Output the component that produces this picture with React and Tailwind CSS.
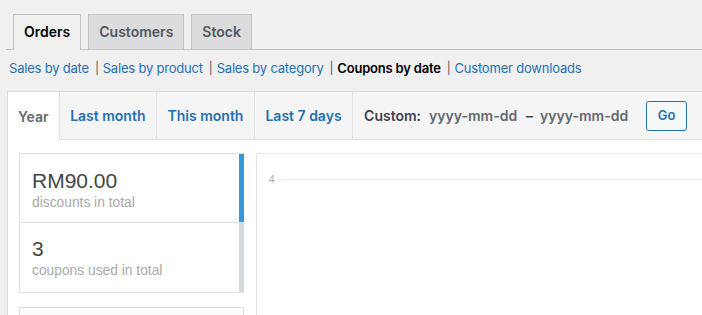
import React from "react";

const navTabs = [
  { label: "Orders", active: true },
  { label: "Customers" },
  { label: "Stock" },
];

const subLinks = [
  { label: "Sales by date" },
  { label: "Sales by product" },
  { label: "Sales by category" },
  { label: "Coupons by date", current: true },
  { label: "Customer downloads" },
];

const ranges = [
  { label: "Year", active: true },
  { label: "Last month" },
  { label: "This month" },
  { label: "Last 7 days" },
];

export default function App() {
  return (
    <div
      className="w-[702px] h-[315px] overflow-hidden bg-[#f0f0f1]"
      style={{ fontFamily: "Inter, 'Noto Sans', sans-serif" }}
    >
      {/* Nav tabs */}
      <div className="ml-[6px] pt-[14px] pl-[7px] flex gap-[7px] border-b border-[#c3c4c7]">
        {navTabs.map((t) => (
          <div
            key={t.label}
            className={
              "h-[35px] px-[10px] flex items-center border-x border-t border-[#c3c4c7] text-[14px] font-semibold leading-[24px] " +
              (t.active
                ? "bg-[#f0f0f1] text-[#000] -mb-px h-[36px] pb-px"
                : "bg-[#dcdcde] text-[#50575e]")
            }
          >
            {t.label}
          </div>
        ))}
      </div>

      {/* Sub links */}
      <div className="mt-[5px] pl-[9px] h-[26px] flex items-center text-[13px] leading-[26px] tracking-[-0.2px]">
        {subLinks.map((l, i) => (
          <React.Fragment key={l.label}>
            <span
              className={
                l.current ? "text-black font-semibold" : "text-[#2271b1]"
              }
            >
              {l.label}
            </span>
            {i < subLinks.length - 1 && (
              <span className="ml-[6px] mr-[4px] text-[#50575e] text-[12px]">|</span>
            )}
          </React.Fragment>
        ))}
      </div>

      {/* Stats box */}
      <div className="ml-[7px] mt-[10px] bg-white border-l border-t border-[#dcdcde] h-[300px]">
        {/* range tabs */}
        <div className="h-[48px] flex bg-[#f5f5f5] border-b border-[#dcdcde] text-[14px] font-semibold">
          {ranges.map((r) => (
            <div
              key={r.label}
              className={
                "flex items-center border-r border-[#e2e2e2] " +
                (r.active
                  ? "px-[10px] bg-white text-[#646970] h-[48px] -mb-px"
                  : "px-[10.5px] text-[#2271b1]")
              }
            >
              {r.label}
            </div>
          ))}
          <div className="flex items-center pl-[11px]">
            <span className="text-[#3c434a]">Custom:</span>
            <span className="ml-[8px] w-[97px] text-[#646970]">yyyy-mm-dd</span>
            <span className="w-[8px] text-[#3c434a]">–</span>
            <span className="ml-[6px] w-[106px] text-[#646970]">yyyy-mm-dd</span>
            <button className="w-[41px] h-[30px] rounded-[3px] border border-[#2271b1] bg-[#f6f7f7] text-[#2271b1] text-[13px] font-semibold">
              Go
            </button>
          </div>
        </div>

        {/* content */}
        <div className="flex pl-[11px] pt-[13px]">
          <div className="w-[225px] shrink-0">
            <ul
              className="border-y border-l border-[#dfdfdf]"
              style={{ fontFamily: "'Liberation Sans', Arial, sans-serif" }}
            >
              <li className="border-r-[5px] border-[#3498db] pl-[12px] pt-[14px] pb-[10px]">
                <div className="text-[21px] leading-[25px] text-[#464646]">RM90.00</div>
                <div className="text-[13.8px] leading-[19px] text-[#aaa]">discounts in total</div>
              </li>
              <li className="border-t border-t-[#dfdfdf] border-r-[5px] border-r-[#d5d9dc] pl-[12px] pt-[13px] pb-[12px]">
                <div className="text-[21px] leading-[25px] text-[#464646]">3</div>
                <div className="text-[13.8px] leading-[19px] text-[#aaa]">coupons used in total</div>
              </li>
            </ul>
            <div className="mt-[14px] h-[40px] border border-[#dfdfdf] bg-[#fcfcfc]" />
          </div>
          <div className="ml-[12px] flex-1 min-w-0 h-[200px] border-l border-t border-[#e5e5e5] bg-white">
            <div
              className="mt-[20px] pl-[12px] h-[10px] flex items-center gap-[6px] text-[10px] text-[#aaa]"
              style={{ fontFamily: "'Liberation Sans', Arial, sans-serif" }}
            >
              <span>4</span>
              <div className="flex-1 h-px bg-[#ececec]" />
            </div>
          </div>
        </div>
      </div>
    </div>
  );
}
